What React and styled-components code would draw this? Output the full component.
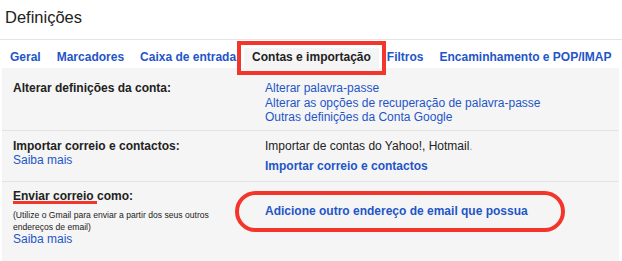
import React from 'react';
import styled, { createGlobalStyle } from 'styled-components';

const GlobalStyle = createGlobalStyle`
  body {
    margin: 0;
    background: #fff;
    font-family: 'Liberation Sans', Arial, sans-serif;
    color: #222;
  }
`;

const Header = styled.div`
  box-sizing: border-box;
  height: 40px;
  padding: 7px 0 0 5px;
  border-bottom: 1px solid #e5e5e5;
`;

const Title = styled.h1`
  margin: 0;
  font-size: 16.5px;
  line-height: 20px;
  font-weight: normal;
  color: #222;
`;

const TabBar = styled.nav`
  display: flex;
  margin: 0 3px 0 2px;
  padding-top: 8px;
`;

const Tab = styled.a`
  display: block;
  height: 20px;
  padding: 0 8px;
  font-size: 12px;
  line-height: 19px;
  font-weight: bold;
  text-decoration: none;
  white-space: nowrap;
  color: ${p => (p.$active ? '#222' : '#1f55c8')};
  background: ${p => (p.$active ? '#f5f5f5' : 'transparent')};
  outline: ${p => (p.$active ? '4px solid #f3362b' : 'none')};
  outline-offset: 3px;
  position: relative;
  z-index: 1;
`;

const Panel = styled.div`
  margin: 0 3px 0 2px;
  background: #f5f5f5;
  min-height: calc(100vh - 68px);
`;

const Row = styled.div`
  position: relative;
  display: grid;
  grid-template-columns: 252px 1fr;
  padding: ${p => p.$pad};
  padding-left: 11px;
  border-bottom: ${p => (p.$last ? 'none' : '1px solid #e3e3e3')};
  font-size: 12px;
  line-height: 14.5px;
`;

const Label = styled.div`
  font-weight: bold;
  color: #222;
`;

const Marked = styled.span`
  position: relative;
  &::after {
    content: '';
    position: absolute;
    left: 0;
    right: -3px;
    top: 12px;
    height: 3px;
    background: #f3362b;
  }
`;

const Note = styled.div`
  font-size: 8.6px;
  line-height: 12px;
  margin: 5px 0 -1px;
  color: #222;
`;

const Link = styled.a`
  display: block;
  color: #1f55c8;
  text-decoration: none;
  font-weight: ${p => (p.$bold ? 'bold' : 'normal')};
  margin-top: ${p => p.$gap || 0};
`;

const Text = styled.div`
  color: #222;
`;

const Dim = styled.span`
  color: #aaa;
`;

const Ring = styled.div`
  position: absolute;
  left: 233px;
  top: 9px;
  width: 330px;
  height: 41px;
  box-sizing: border-box;
  border: 4px solid #f3362b;
  border-radius: 21px;
  pointer-events: none;
`;

const tabs = [
  'Geral',
  'Marcadores',
  'Caixa de entrada',
  'Contas e importação',
  'Filtros',
  'Encaminhamento e POP/IMAP',
];

export default function App() {
  return (
    <>
      <GlobalStyle />
      <Header>
        <Title>Definições</Title>
      </Header>
      <TabBar>
        {tabs.map(t => (
          <Tab key={t} $active={t === 'Contas e importação'}>
            {t}
          </Tab>
        ))}
      </TabBar>
      <Panel>
        <Row $pad="13px 0 5px">
          <Label>Alterar definições da conta:</Label>
          <div>
            <Link>Alterar palavra-passe</Link>
            <Link>Alterar as opções de recuperação de palavra-passe</Link>
            <Link>Outras definições da Conta Google</Link>
          </div>
        </Row>
        <Row $pad="8px 0 7.5px">
          <div>
            <Label>Importar correio e contactos:</Label>
            <Link>Saiba mais</Link>
          </div>
          <div>
            <Text>
              Importar de contas do Yahoo!, Hotmail<Dim>.</Dim>
            </Text>
            <Link $bold $gap="5.5px">Importar correio e contactos</Link>
          </div>
        </Row>
        <Row $pad="7.5px 0 12px" $last>
          <div>
            <Label>
              <Marked>Enviar correio</Marked> como:
            </Label>
            <Note>
              (Utilize o Gmail para enviar a partir dos seus outros
              <br />
              endereços de email)
            </Note>
            <Link>Saiba mais</Link>
          </div>
          <div>
            <Link $bold $gap="15.3px">Adicione outro endereço de email que possua</Link>
          </div>
          <Ring />
        </Row>
      </Panel>
    </>
  );
}
